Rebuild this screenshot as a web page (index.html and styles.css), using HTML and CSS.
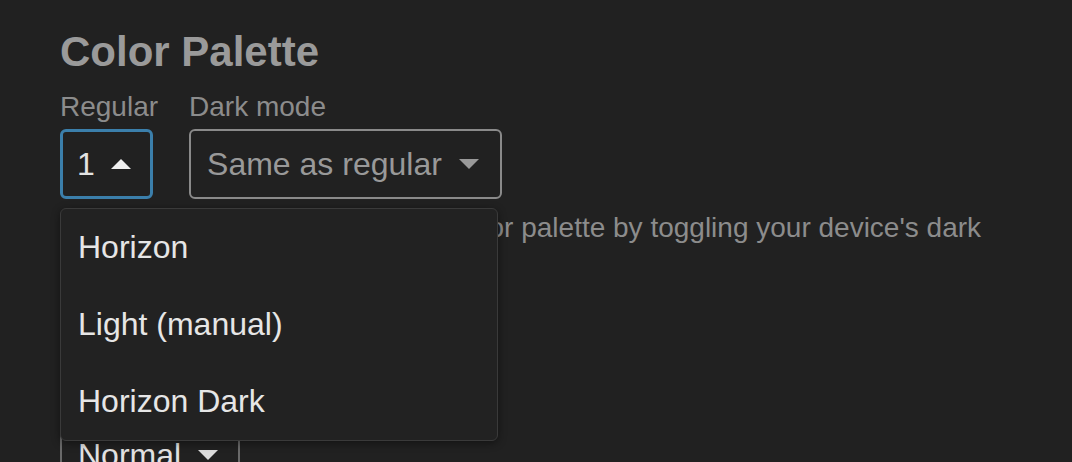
FILE: index.html
```html
<!DOCTYPE html>
<html lang="en">
<head>
<meta charset="UTF-8">
<title>Color Palette</title>
<link rel="stylesheet" href="styles.css">
</head>
<body>

<div class="page">
	<h2 class="title">Color Palette</h2>
	<div class="fields">
		<div class="field field-open">
			<label class="label">Regular</label>
			<div class="select select-focus">
				<span class="value">1</span>
				<span class="arrow arrow-up"></span>
			</div>
			<ul class="menu">
				<li>Horizon</li>
				<li>Light (manual)</li>
				<li>Horizon Dark</li>
			</ul>
		</div>
		<div class="field">
			<label class="label">Dark mode</label>
			<div class="select">
				<span class="value value-dim">Same as regular</span>
				<span class="arrow arrow-dim"></span>
			</div>
		</div>
	</div>
	<p class="hint">You can switch to a Dark mode color palette by toggling your device's dark mode.</p>

	<div class="fields fields-next">
		<div class="field">
			<div class="select select-small">
				<span class="value">Normal</span>
				<span class="arrow"></span>
			</div>
		</div>
	</div>
</div>

</body>
</html>
```

FILE: styles.css
```css
*{ margin:0; padding:0; list-style:none; box-sizing:border-box}
body{
	background-color:#212121;
	font-family:"Liberation Sans", Arial, sans-serif;
	color:#999;
}
.page{
	padding:0 60px;
}
.title{
	margin-top:31px;
	font-size:42px;
	line-height:42px;
	font-weight:bold;
	color:#9a9a9a;
}
.fields{
	display:flex;
	gap:31px;
	margin-top:18px;
}
.fields-next{
	margin-top:138px;
}
.field{
	display:flex;
	flex-direction:column;
	align-items:flex-start;
	gap:6px;
}
.field-open{
	position:relative;
}
.label{
	font-size:28px;
	line-height:32px;
	color:#8c8c8c;
}
.select{
	display:flex;
	align-items:center;
	gap:17px;
	height:70px;
	padding:0 21px 0 16px;
	border:2px solid #8a8a8a;
	border-radius:6px;
	font-size:32px;
}
.select-focus{
	border:3px solid #3b7fab;
	padding:0 19px 0 14px;
	gap:16px;
}
.select-small{
	width:180px;
	border-color:#6a6a6a;
}
.value{
	color:#e2e2e2;
}
.value-dim{
	color:#999;
}
.arrow{
	width:0;
	height:0;
	border-left:10px solid transparent;
	border-right:10px solid transparent;
	border-top:10px solid #dcdcdc;
}
.arrow-up{
	border-top:0;
	border-bottom:10px solid #f0f0f0;
}
.arrow-dim{
	border-top-color:#999;
}
.hint{
	margin-top:11px;
	width:940px;
	font-size:28px;
	line-height:36px;
	color:#8c8c8c;
}
.menu{
	position:absolute;
	top:117px;
	left:0;
	z-index:2;
	width:438px;
	background-color:#222;
	border:1px solid #3a3a3a;
	border-radius:6px;
	box-shadow:0 2px 8px rgba(0,0,0,0.45);
}
.menu li{
	height:77px;
	line-height:77px;
	padding-left:17px;
	font-size:32px;
	color:#e6e6e6;
}
```
